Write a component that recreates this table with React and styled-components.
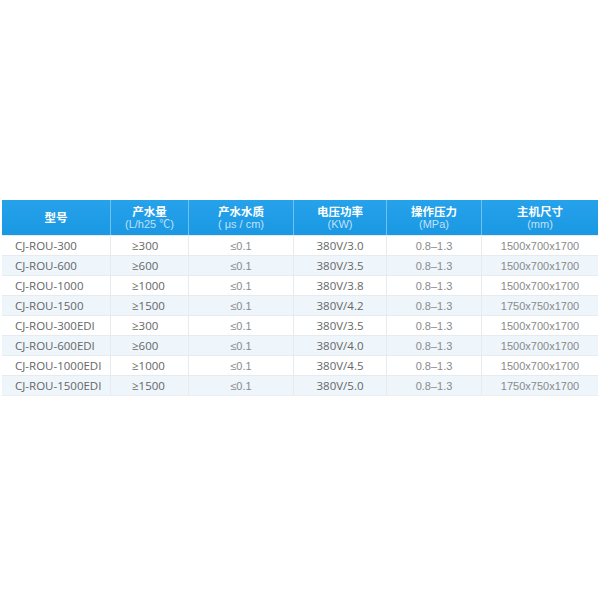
import React from "react";
import styled, { createGlobalStyle } from "styled-components";

const GlobalStyle = createGlobalStyle`
    body {
        margin: 0;
        background: #ffffff;
        font-family: "Open Sans", "Noto Sans CJK SC", sans-serif;
    }
`;

const columns = "108px 78px 105px 93px 95px 117px";

const headers = [
    { title: "型号" },
    { title: "产水量", sub: "(L/h25 ℃)" },
    { title: "产水水质", sub: "( μs / cm)" },
    { title: "电压功率", sub: "(KW)" },
    { title: "操作压力", sub: "(MPa)" },
    { title: "主机尺寸", sub: "(mm)" },
];

const rows = [
    ["CJ-ROU-300", "≥300", "≤0.1", "380V/3.0", "0.8–1.3", "1500x700x1700"],
    ["CJ-ROU-600", "≥600", "≤0.1", "380V/3.5", "0.8–1.3", "1500x700x1700"],
    ["CJ-ROU-1000", "≥1000", "≤0.1", "380V/3.8", "0.8–1.3", "1500x700x1700"],
    ["CJ-ROU-1500", "≥1500", "≤0.1", "380V/4.2", "0.8–1.3", "1750x750x1700"],
    ["CJ-ROU-300EDI", "≥300", "≤0.1", "380V/3.5", "0.8–1.3", "1500x700x1700"],
    ["CJ-ROU-600EDI", "≥600", "≤0.1", "380V/4.0", "0.8–1.3", "1500x700x1700"],
    ["CJ-ROU-1000EDI", "≥1000", "≤0.1", "380V/4.5", "0.8–1.3", "1500x700x1700"],
    ["CJ-ROU-1500EDI", "≥1500", "≤0.1", "380V/5.0", "0.8–1.3", "1750x750x1700"],
];

// how each column sets its text: alignment and which face
const cellKinds = ["model", "left", "light", "center", "light", "light"];

const App = () => {
    return (
        <Page>
            <GlobalStyle />
            <SpecTable>
                <HeaderRow>
                    {headers.map((h) => (
                        <HeaderCell key={h.title}>
                            <HeaderTitle>{h.title}</HeaderTitle>
                            {h.sub && <HeaderSub>{h.sub}</HeaderSub>}
                        </HeaderCell>
                    ))}
                </HeaderRow>
                {rows.map((row, i) => (
                    <DataRow key={row[0]} $striped={i % 2 === 1}>
                        {row.map((value, j) => (
                            <DataCell key={j} $kind={cellKinds[j]}>
                                {value}
                            </DataCell>
                        ))}
                    </DataRow>
                ))}
            </SpecTable>
        </Page>
    );
};

export default App;

// Styled components
const Page = styled.div`
    width: 600px;
    height: 600px;
    padding: 200px 2px 0 2px;
    box-sizing: border-box;
`;

const SpecTable = styled.div`
    display: flex;
    flex-direction: column;
    width: 596px;
    border-bottom: 1px solid #eceff2;
`;

const HeaderRow = styled.div`
    display: grid;
    grid-template-columns: ${columns};
    height: 35px;
    background: linear-gradient(#25a2ea, #1b98e3);
`;

const HeaderCell = styled.div`
    display: flex;
    flex-direction: column;
    align-items: center;
    justify-content: center;
    border-left: 1px solid #6ec2f1;
    color: #ffffff;

    &:first-child {
        border-left: none;
    }
`;

const HeaderTitle = styled.div`
    font-family: "Noto Sans CJK SC", sans-serif;
    font-weight: 700;
    font-size: 11.5px;
    line-height: 13px;
`;

const HeaderSub = styled.div`
    font-family: "Liberation Sans", "Noto Sans CJK SC", sans-serif;
    font-size: 11px;
    line-height: 13px;
    color: rgba(255, 255, 255, 0.72);
`;

const DataRow = styled.div`
    display: grid;
    grid-template-columns: ${columns};
    height: 20px;
    border-top: 1px solid #e8ebee;
    background: ${(p) => (p.$striped ? "#eef5fb" : "#ffffff")};
    box-sizing: border-box;

    &:first-of-type {
        border-top: none;
    }
`;

const DataCell = styled.div`
    display: flex;
    align-items: center;
    border-left: 1px solid #e8ebee;
    font-size: ${(p) => (p.$kind === "light" ? "11px" : "11.5px")};
    font-family: ${(p) =>
        p.$kind === "light"
            ? `"Liberation Sans", "Noto Sans CJK SC", sans-serif`
            : `"Open Sans", "Noto Sans CJK SC", sans-serif`};
    color: ${(p) => (p.$kind === "light" ? "#8a8a8a" : "#666666")};
    justify-content: ${(p) =>
        p.$kind === "model" || p.$kind === "left" ? "flex-start" : "center"};
    padding-left: ${(p) =>
        p.$kind === "model" ? "13px" : p.$kind === "left" ? "21px" : "0"};
    white-space: nowrap;

    &:first-child {
        border-left: none;
    }
`;
